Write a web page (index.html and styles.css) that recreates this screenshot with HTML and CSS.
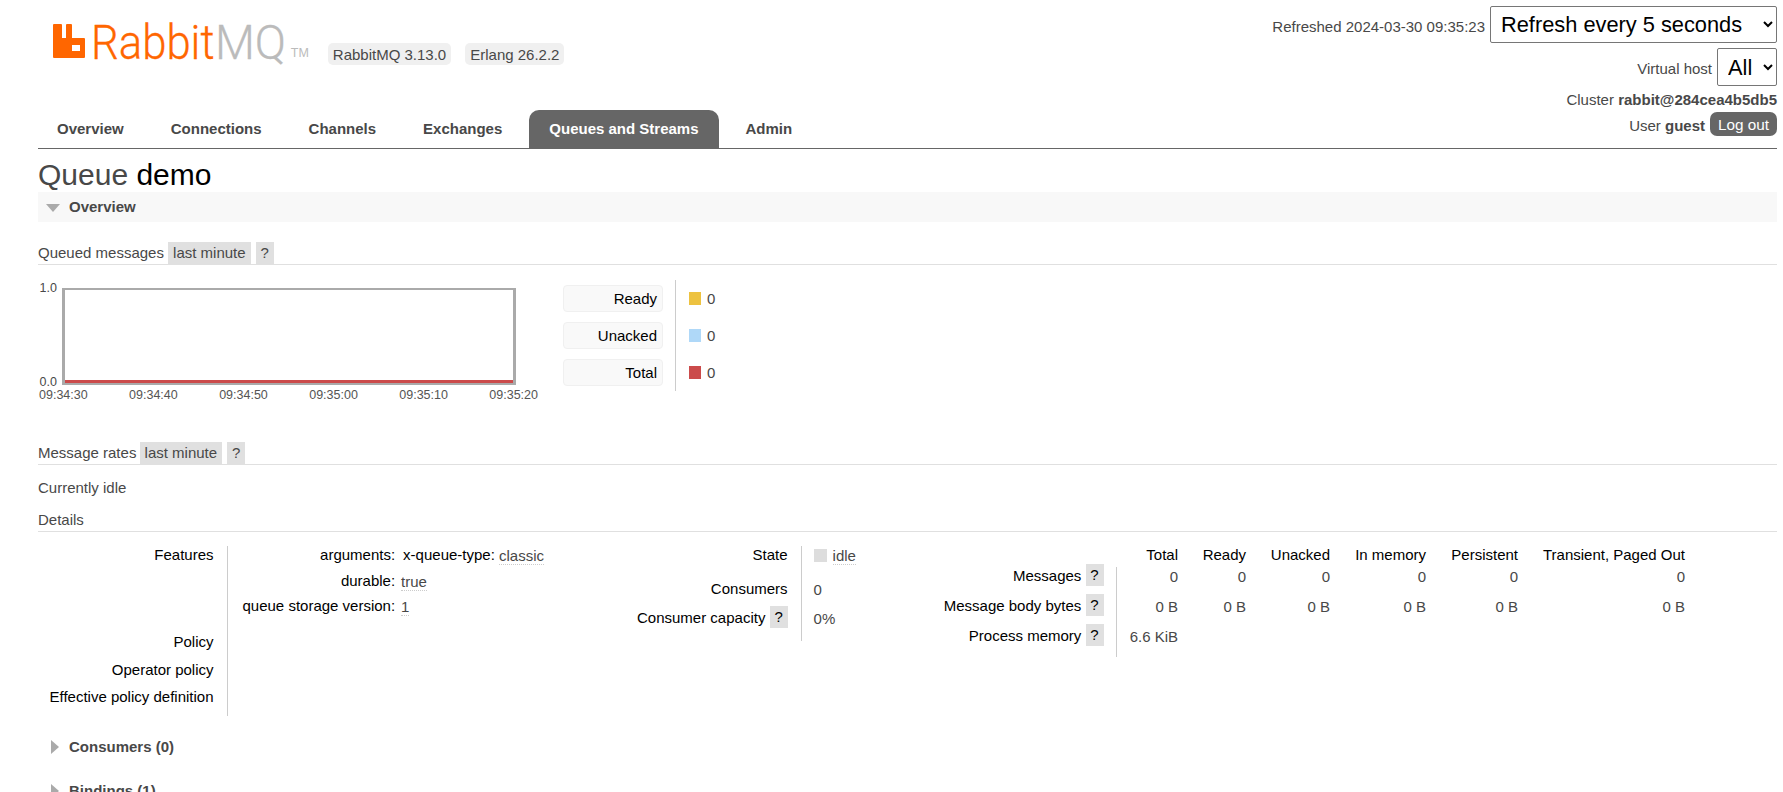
FILE: index.html
```html
<!DOCTYPE html>
<html>
<head>
  <title>RabbitMQ Management</title>
  <link rel="stylesheet" href="styles.css">
</head>
<body>
  <!-- Header -->
  <div class="header">
    <div class="header-left">
      <div class="brand">
        <svg class="logo-icon" viewBox="0 0 32 38" width="32" height="38">
          <path fill="#f60" fill-rule="evenodd" d="M0 5a1 1 0 0 1 1-1h7a1 1 0 0 1 1 1v13h4V5a1 1 0 0 1 1-1h4a1 1 0 0 1 1 1v13h12a1 1 0 0 1 1 1v18a1 1 0 0 1-1 1H1a1 1 0 0 1-1-1zM19 25v6h8v-6z"/>
        </svg>
        <span class="logo-word logo-rabbit">Rabbit</span>
        <span class="logo-word logo-mq">MQ</span>
        <span class="logo-tm">TM</span>
        <span class="version">RabbitMQ 3.13.0</span>
        <span class="version">Erlang 26.2.2</span>
      </div>
      <ul class="tabs">
        <li><a>Overview</a></li>
        <li><a>Connections</a></li>
        <li><a>Channels</a></li>
        <li><a>Exchanges</a></li>
        <li><a class="selected">Queues and Streams</a></li>
        <li><a>Admin</a></li>
      </ul>
    </div>
    <div class="header-right">
      <div class="header-line refresh-line">
        <span>Refreshed 2024-03-30 09:35:23</span>
        <select class="refresh-select"><option>Refresh every 5 seconds</option></select>
      </div>
      <div class="header-line vhost-line">
        <span>Virtual host</span>
        <select class="vhost-select"><option>All</option></select>
      </div>
      <div class="header-line cluster-line">Cluster&nbsp;<b>rabbit@284cea4b5db5</b></div>
      <div class="header-line user-line">
        <span>User&nbsp;<b>guest</b></span>
        <button class="logout">Log out</button>
      </div>
    </div>
  </div>

  <div class="main">
    <h1>Queue <b>demo</b></h1>

    <div class="section-bar"><span class="arrow-down"></span>Overview</div>

    <h3 class="chart-title first">Queued messages <span class="pill">last minute</span><span class="pill help">?</span></h3>
    <div class="chart-row">
      <div class="chart">
        <div class="chart-y"><span>1.0</span><span>0.0</span></div>
        <div class="chart-plot"><div class="chart-line"></div></div>
        <div class="chart-x">
          <span>09:34:30</span><span>09:34:40</span><span>09:34:50</span><span>09:35:00</span><span>09:35:10</span><span>09:35:20</span>
        </div>
      </div>
      <div class="legend">
        <div class="legend-labels">
          <div class="legend-label">Ready</div>
          <div class="legend-label">Unacked</div>
          <div class="legend-label">Total</div>
        </div>
        <div class="legend-values">
          <div class="legend-value"><span class="swatch yellow"></span>0</div>
          <div class="legend-value"><span class="swatch blue"></span>0</div>
          <div class="legend-value"><span class="swatch red"></span>0</div>
        </div>
      </div>
    </div>

    <h3 class="chart-title rates">Message rates <span class="pill">last minute</span><span class="pill help">?</span></h3>
    <p class="idle-note">Currently idle</p>
    <h3 class="chart-title details-title">Details</h3>

    <div class="details">
      <table class="facts facts-main">
        <tr class="row-features">
          <th>Features</th>
          <td>
            <table class="features">
              <tr><th>arguments:</th><td><span class="arg-key">x-queue-type:</span> <abbr>classic</abbr></td></tr>
              <tr><th>durable:</th><td><abbr>true</abbr></td></tr>
              <tr><th>queue storage version:</th><td><abbr>1</abbr></td></tr>
            </table>
          </td>
        </tr>
        <tr class="row-policy"><th>Policy</th><td></td></tr>
        <tr class="row-operator"><th>Operator policy</th><td></td></tr>
        <tr class="row-effective"><th>Effective policy definition</th><td></td></tr>
      </table>

      <table class="facts facts-state">
        <tr class="row-state"><th>State</th><td><span class="swatch grey"></span><abbr>idle</abbr></td></tr>
        <tr class="row-consumers"><th>Consumers</th><td>0</td></tr>
        <tr class="row-capacity"><th>Consumer capacity <span class="pill help">?</span></th><td>0%</td></tr>
      </table>

      <table class="stats">
        <tr class="stats-head">
          <th></th>
          <td>Total</td><td>Ready</td><td>Unacked</td><td>In memory</td><td>Persistent</td><td>Transient, Paged Out</td>
        </tr>
        <tr class="stats-row">
          <th>Messages <span class="pill help">?</span></th>
          <td>0</td><td>0</td><td>0</td><td>0</td><td>0</td><td>0</td>
        </tr>
        <tr class="stats-row">
          <th>Message body bytes <span class="pill help">?</span></th>
          <td>0 B</td><td>0 B</td><td>0 B</td><td>0 B</td><td>0 B</td><td>0 B</td>
        </tr>
        <tr class="stats-row">
          <th>Process memory <span class="pill help">?</span></th>
          <td>6.6 KiB</td><td></td><td></td><td></td><td></td><td></td>
        </tr>
      </table>
    </div>

    <div class="section-head consumers"><span class="arrow-right"></span>Consumers (0)</div>
    <div class="section-head bindings"><span class="arrow-right"></span>Bindings (1)</div>
  </div>
</body>
</html>
```

FILE: styles.css
```css
html, body {
  height: 100%;
  overflow: hidden;
}

body {
  margin: 0;
  padding: 0;
  background: #fff;
  color: #484848;
  font-family: "Liberation Sans", Arial, sans-serif;
  font-size: 15px;
  line-height: 17px;
}

/* Header */
.header {
  display: flex;
  justify-content: space-between;
  height: 148px;
  margin: 0 6px 0 38px;
  border-bottom: 1px solid #666;
}

.header-left {
  display: flex;
  flex-direction: column;
  justify-content: space-between;
}

.brand {
  display: flex;
  align-items: flex-start;
  padding: 20px 0 0 15px;
}

.logo-icon {
  display: block;
  margin-right: 6px;
}

.logo-word {
  display: block;
  height: 44px;
  line-height: 46px;
  font-family: Roboto, "Liberation Sans", sans-serif;
  font-size: 48px;
  font-weight: 300;
  -webkit-text-stroke: 0.3px;
  transform-origin: left center;
}

.logo-rabbit {
  color: #f60;
  margin-right: -12px;
  transform: scaleX(0.91);
}

.logo-mq {
  color: #bbb;
  margin-right: -3px;
  transform: scaleX(0.96);
}

.logo-tm {
  margin: 27px 19px 0 5px;
  color: #bbb;
  font-size: 12.5px;
  line-height: 12px;
}

.version {
  margin: 23px 14px 0 0;
  padding: 3px 5px;
  height: 16px;
  line-height: 17px;
  background: #f0f0f0;
  border-radius: 5px;
}

.tabs {
  display: flex;
  gap: 7px;
  margin: 0 0 0 -1px;
  padding: 0;
  list-style: none;
}

.tabs a {
  display: block;
  height: 38px;
  line-height: 38px;
  padding: 0 20px;
  font-weight: bold;
  border-radius: 10px 10px 0 0;
}

.tabs a.selected {
  background: #666;
  color: #fff;
}

.header-right {
  display: flex;
  flex-direction: column;
  align-items: flex-end;
}

.header-line {
  display: flex;
  align-items: center;
  gap: 5px;
}

.refresh-line {
  margin-top: 6px;
}

.refresh-line span {
  padding-top: 4px;
}

.vhost-line {
  margin-top: 5px;
}

.vhost-line span {
  padding-top: 2px;
}

.cluster-line {
  margin-top: 5px;
  gap: 0;
}

.user-line {
  margin-top: 4px;
}

.user-line span {
  padding-top: 2px;
}

select {
  height: 37px;
  padding: 0 6px;
  background: #fff;
  color: #000;
  border: 1px solid #767676;
  border-radius: 2px;
  font-family: "Liberation Sans", Arial, sans-serif;
  font-size: 21.8px;
}

.refresh-select {
  width: 287px;
}

.vhost-select {
  width: 60px;
  height: 38px;
}

.logout {
  width: 67px;
  height: 24px;
  padding: 2px 0 0 0;
  background: #666;
  color: #fff;
  border: none;
  border-radius: 7px;
  font-family: "Liberation Sans", Arial, sans-serif;
  font-size: 15.3px;
}

/* Main content */
.main {
  margin: 0 6px 0 38px;
}

h1 {
  margin: 0;
  padding-top: 9px;
  height: 34px;
  line-height: 34px;
  font-size: 30px;
  font-weight: normal;
}

h1 b {
  font-weight: normal;
  color: #000;
}

.section-bar {
  display: flex;
  align-items: center;
  box-sizing: border-box;
  height: 30px;
  padding-bottom: 2px;
  background: #f8f8f8;
  font-weight: bold;
}

.arrow-down {
  width: 0;
  height: 0;
  margin: 4px 9px 0 8px;
  border-left: 7px solid transparent;
  border-right: 7px solid transparent;
  border-top: 8px solid #aaa;
}

h3.chart-title {
  display: flex;
  align-items: flex-start;
  height: 22px;
  margin: 0;
  line-height: 21px;
  font-size: 15px;
  font-weight: normal;
  border-bottom: 1px solid #e0e0e0;
  white-space: pre;
}

.first {
  margin-top: 20px !important;
}

.pill {
  display: inline-block;
  height: 22px;
  line-height: 21px;
  padding: 0 5px;
  background: #e0e0e0;
}

.pill.help {
  width: 18px;
  padding: 0;
  margin-left: 5px;
  text-align: center;
}

.rates > .pill:first-of-type {
  margin-left: -1px;
}

/* Chart */
.chart-row {
  display: flex;
  height: 177px;
}

.chart {
  display: grid;
  grid-template-columns: 24px 454px 10px;
  grid-template-rows: 97px auto;
  margin: 23px 0 0 0;
  width: 525px;
  height: 140px;
  font-size: 12.5px;
}

.chart-y {
  display: flex;
  flex-direction: column;
  justify-content: space-between;
  align-items: flex-end;
  padding: 0 5px 0 0;
  margin: -8px 0 -6px 0;
}

.chart-plot {
  display: flex;
  align-items: flex-end;
  box-sizing: border-box;
  border-style: solid;
  border-color: #aaa;
  border-width: 2px 3px 2px 3px;
}

.chart-line {
  flex: 1;
  height: 3px;
  background: #cb4b4b;
}

.chart-x {
  grid-column: 1 / -1;
  display: flex;
  gap: 41.4px;
  margin: 2px 0 0 1px;
  color: #545454;
}

.chart-x span {
  flex: none;
  white-space: nowrap;
}

.legend {
  display: flex;
  margin: 15px 0 0 0;
  height: 111px;
}

.legend-labels {
  display: flex;
  flex-direction: column;
  gap: 10px;
  padding-top: 5px;
  padding-right: 12px;
  border-right: 1px solid #ccc;
}

.legend-label {
  box-sizing: border-box;
  width: 100px;
  height: 27px;
  line-height: 25px;
  padding-right: 5px;
  text-align: right;
  color: #000;
  background: #f9f9f9;
  border: 1px solid #f0f0f0;
  border-radius: 4px;
}

.legend-values {
  display: flex;
  flex-direction: column;
  gap: 10px;
  padding-top: 5px;
  padding-left: 13px;
}

.legend-value {
  display: flex;
  align-items: center;
  height: 27px;
}

.swatch {
  display: inline-block;
  width: 12px;
  height: 13px;
  margin-right: 6px;
}

.yellow { background: #edc240; }
.blue { background: #afd8f8; }
.red { background: #cb4b4b; }
.grey { background: #ddd; }

.idle-note {
  margin: 0;
  padding-top: 14px;
  height: 17px;
}

.details-title {
  margin-top: 13px !important;
}

/* Details tables */
.details {
  display: flex;
  margin-top: 14px;
  height: 170px;
}

.details table {
  border-collapse: collapse;
  border-spacing: 0;
}

.details th {
  font-weight: normal;
  color: #000;
  text-align: right;
  vertical-align: top;
  white-space: nowrap;
}

.details td {
  vertical-align: top;
  white-space: nowrap;
}

abbr {
  border-bottom: 1px dotted #ccc;
}

.facts-main {
  flex: 0 0 599px;
  height: 170px;
}

.facts-main > tbody > tr > th {
  width: 189px;
  padding: 0 13px 0 0;
  box-sizing: border-box;
  border-right: 1px solid #ccc;
}

.facts-main > tbody > tr > td {
  padding: 0 0 0 15px;
}

.row-features > * { height: 87px; }
.row-policy > * { height: 28px; }
.row-operator > * { height: 27px; }
.row-effective > * { height: 28px; }

.features th {
  width: 152px;
  padding: 0 4px 0 0;
  height: 25px;
}

.features tr:first-child th {
  height: 26px;
}

.features td {
  padding: 1px 0 0 2px;
}

.arg-key {
  display: inline-block;
  margin: -1px 0 0 2px;
  color: #000;
  vertical-align: top;
}

.facts-state {
  flex: 0 0 303px;
  height: 92px;
}

.facts-state th {
  width: 163px;
  padding: 0 13px 0 0;
  box-sizing: border-box;
  border-right: 1px solid #ccc;
}

.facts-state td {
  padding: 1px 0 0 12px;
}

.facts-state .swatch {
  width: 13px;
  height: 13px;
  margin: 2px 6px 0 0;
  vertical-align: top;
}

.row-state > * { height: 33px; }
.row-consumers > * { height: 28px; }
.row-capacity > * { height: 31px; }

.details th .help {
  margin: -3px 0 0 0;
  vertical-align: top;
}

.stats {
  flex: none;
  height: 108px;
}

.stats th {
  width: 176px;
  padding: 0 12px 0 0;
  box-sizing: border-box;
  border-right: 1px solid #ccc;
}

.stats-head th {
  border-right: none;
}

.stats td {
  padding: 1px 0 0 0;
  text-align: right;
}

.stats-head > * { height: 21px; }
.stats-row > * { height: 29px; }

.stats-head td {
  padding-top: 0;
  color: #000;
}

.stats-head td:nth-child(2) { width: 62px; }
.stats-head td:nth-child(3) { width: 68px; }
.stats-head td:nth-child(4) { width: 84px; }
.stats-head td:nth-child(5) { width: 96px; }
.stats-head td:nth-child(6) { width: 92px; }
.stats-head td:nth-child(7) { width: 167px; }

.section-head {
  display: flex;
  align-items: center;
  font-weight: bold;
  padding-left: 13px;
}

.arrow-right {
  width: 0;
  height: 0;
  margin-right: 10px;
  border-top: 7px solid transparent;
  border-bottom: 7px solid transparent;
  border-left: 8px solid #aaa;
}

.consumers {
  margin-top: 22px;
}

.bindings {
  margin-top: 27px;
}
```
